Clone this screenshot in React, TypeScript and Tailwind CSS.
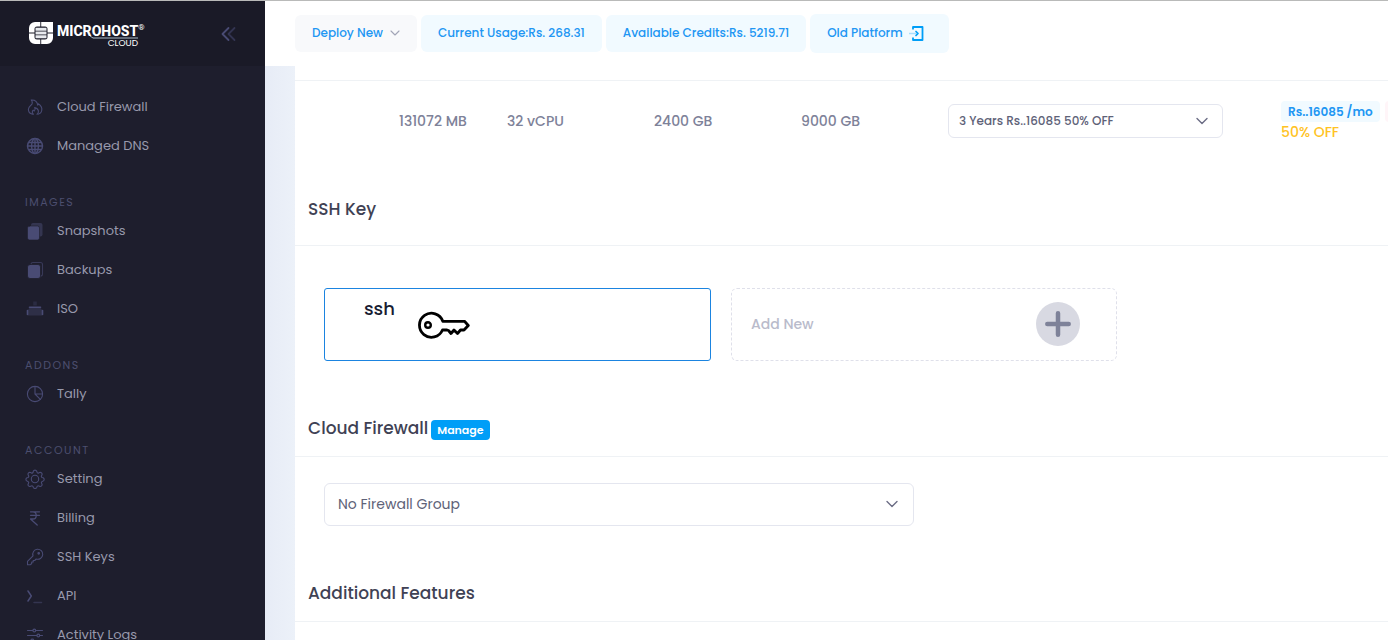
import type { ReactNode } from "react";

const stroke = {
  fill: "none",
  stroke: "currentColor",
  strokeWidth: 1.1,
  strokeLinecap: "round" as const,
  strokeLinejoin: "round" as const,
};

function Icon({ children }: { children: ReactNode }) {
  return (
    <svg viewBox="0 0 20 20" className="size-5 shrink-0 text-[#494b74]" aria-hidden="true" {...stroke}>
      {children}
    </svg>
  );
}

const icons: Record<string, ReactNode> = {
  fire: (
    <Icon>
      <path d="M7.600 17.200C4.900 16.600 3.300 14.700 3.400 12.200C3.500 9.400 6.300 8.600 7.100 6.700C7.500 5.400 7.200 4.100 6.200 3C9.500 2.800 12.300 4.600 12.700 8.200C13.100 7.800 13.300 7.300 13.300 6.800C15.600 8.400 17.200 10.600 16.800 13C16.500 15.200 15.100 16.800 13 17.200" />
      <path d="M8.400 17.200C7 16.100 6.900 14.300 8.200 13.200C8.600 13.800 9 14 9.400 14C10.300 12.900 10.300 11.700 9.700 10.600C12 11.200 13.600 13 13.400 15C13.300 16 12.800 16.800 12 17.200" />
    </Icon>
  ),
  globe: (
    <Icon>
      <g strokeWidth="1.4">
        <circle cx="10" cy="10" r="7.500" />
        <path d="M2.500 10h15M4 6.500h12M4 13.500h12M10 2.500v15" />
        <path d="M8.500 3c-2.600 4-2.600 10 0 14M11.500 3c2.600 4 2.600 10 0 14" />
      </g>
    </Icon>
  ),
  copies: (
    <Icon>
      <rect x="6" y="2" width="11.500" height="13.500" rx="2" fill="currentColor" stroke="none" opacity=".5" />
      <rect x="2.500" y="5" width="12" height="14" rx="2" fill="currentColor" stroke="#1e1e2d" strokeWidth=".6" />
    </Icon>
  ),
  backup: (
    <Icon>
      <rect x="6" y="2.500" width="11.500" height="13.500" rx="2" opacity=".6" />
      <rect x="2.500" y="4.500" width="13" height="14" rx="2.500" fill="currentColor" stroke="#1e1e2d" strokeWidth=".8" />
    </Icon>
  ),
  iso: (
    <Icon>
      <path d="M10 2.500v4" strokeWidth="3.500" strokeLinecap="butt" opacity=".3" />
      <path d="M5 8h10l2 3v5.500H3V11z" fill="currentColor" stroke="none" opacity=".38" />
      <path d="M4.500 8.200h11" strokeWidth="1.600" />
      <path d="M2.500 11.500v4M17.500 11.500v4" strokeWidth="1.600" />
    </Icon>
  ),
  pie: (
    <Icon>
      <circle cx="10" cy="10" r="7.600" />
      <path d="M10 2.500V10h7.500M10 10l5.300 5.300" />
    </Icon>
  ),
  gear: (
    <Icon>
      <circle cx="10" cy="10" r="3.700" />
      <path d="M8.300 2.300a1.800 1.800 0 0 1 3.400 0l.3.900a1.300 1.300 0 0 0 1.800.8l.7-.4a1.800 1.800 0 0 1 2.400 2.400l-.4.800a1.300 1.300 0 0 0 .7 1.700l.9.300a1.800 1.800 0 0 1 0 3.300l-.9.300a1.300 1.300 0 0 0-.7 1.700l.4.800a1.800 1.800 0 0 1-2.400 2.400l-.8-.4a1.300 1.300 0 0 0-1.700.7l-.3.900a1.800 1.800 0 0 1-3.300 0l-.3-.9a1.300 1.300 0 0 0-1.700-.7l-.8.400a1.800 1.800 0 0 1-2.400-2.400l.4-.8a1.300 1.300 0 0 0-.7-1.700l-.9-.3a1.800 1.800 0 0 1 0-3.300l.9-.3a1.300 1.300 0 0 0 .7-1.700l-.4-.8a1.800 1.800 0 0 1 2.400-2.400l.8.400a1.300 1.300 0 0 0 1.700-.7z" />
    </Icon>
  ),
  rupee: (
    <Icon>
      <path d="M5.500 3.800h9M5.500 7.300h9M5.500 3.800h2.300c4.600 0 4.600 7.200 0 7.200H5.500l6.700 6" strokeWidth="1.300" />
    </Icon>
  ),
  key: (
    <Icon>
      <path d="M2.500 14.300 8 8.800A5 5 0 1 1 11.200 12l-1.500 1.500H8.200v1.500H6.700v1.500l-1.200 1.200h-3z" />
      <circle cx="13.700" cy="6.300" r=".8" fill="currentColor" />
    </Icon>
  ),
  terminal: (
    <Icon>
      <path d="m3 5 3.300 5L3 15" strokeWidth="1.500" />
      <path d="M9 16.500h7.500" strokeWidth="1.500" opacity=".5" />
    </Icon>
  ),
  sliders: (
    <Icon>
      <path d="M2.500 5.500h5.300M10.800 5.500h6.700M2.500 10.500h9.300M14.800 10.500h2.700M2.500 15.500h3.300M8.800 15.500h8.700" />
      <circle cx="9.300" cy="5.500" r="1.400" />
      <circle cx="13.300" cy="10.500" r="1.400" />
      <circle cx="7.300" cy="15.500" r="1.400" />
    </Icon>
  ),
};

type Group = { title?: string; items: { icon: string; label: string }[] };

const groups: Group[] = [
  {
    items: [
      { icon: "fire", label: "Cloud Firewall" },
      { icon: "globe", label: "Managed DNS" },
    ],
  },
  {
    title: "Images",
    items: [
      { icon: "copies", label: "Snapshots" },
      { icon: "backup", label: "Backups" },
      { icon: "iso", label: "ISO" },
    ],
  },
  { title: "Addons", items: [{ icon: "pie", label: "Tally" }] },
  {
    title: "Account",
    items: [
      { icon: "gear", label: "Setting" },
      { icon: "rupee", label: "Billing" },
      { icon: "key", label: "SSH Keys" },
      { icon: "terminal", label: "API" },
      { icon: "sliders", label: "Activity Logs" },
    ],
  },
];

function Logo() {
  return (
    <a href="#" className="flex items-start gap-[3px] text-white" aria-label="Microhost Cloud">
      <svg viewBox="0 0 26 24" className="h-6 w-[26px]" aria-hidden="true">
        <path
          d="M7 1h5.300v4.500H9A2.500 2.500 0 0 0 6.500 8v3.500H1V7a6 6 0 0 1 6-6zM13.200 1H25v10.500h-5.500V8A2.500 2.500 0 0 0 17 5.500h-3.800zM1 12.500h5.500V16A2.500 2.500 0 0 0 9 18.500h3.300V23H7a6 6 0 0 1-6-6zM19.500 12.500H25V17a6 6 0 0 1-6 6h-5.800v-4.500H17a2.500 2.500 0 0 0 2.500-2.500z"
          fill="#fff"
        />
        <path d="M7.500 6.800h11v3h-11zM7.500 10.500h11v3h-11zM7.500 14.200h11v3h-11z" fill="#e8eaee" />
      </svg>
      <span className="flex flex-col pt-[3px] font-['Roboto',sans-serif]">
        <span className="flex h-3 items-start text-sm leading-[14px] font-extrabold">
          MICROHOST<span className="text-[8px] leading-[8px] font-normal">®</span>
        </span>
        <svg viewBox="0 0 82 3" className="h-[3px] w-[82px]" aria-hidden="true">
          <path d="M33 0l3 2h45" fill="none" stroke="#a9b9c6" />
        </svg>
        <span className="w-[81px] text-right font-['Poppins','Inter',sans-serif] text-[9px] leading-2">CLOUD</span>
      </span>
    </a>
  );
}

function Sidebar() {
  return (
    <aside className="flex w-[265px] shrink-0 flex-col overflow-hidden bg-[#1e1e2d]">
      <div className="flex h-[65px] shrink-0 items-center justify-between bg-[#1a1a27] pr-7 pl-7">
        <Logo />
        <button type="button" aria-label="Collapse menu" className="text-[#494b74]">
          <svg viewBox="0 0 16 16" className="size-4" aria-hidden="true" {...stroke} strokeWidth={1.8}>
            <path d="M7.500 2 1.500 8l6 6" />
            <path d="m13.500 2-6 6 6 6" opacity=".55" />
          </svg>
        </button>
      </div>
      <nav className="pt-[21px]">
        {groups.map((group, i) => (
          <section key={i}>
            {group.title && (
              <h2 className="mt-7 pl-[25px] text-[11px] leading-[18px] tracking-[1.5px] text-[#4c4e6f] uppercase">
                {group.title}
              </h2>
            )}
            <ul>
              {group.items.map((item) => (
                <li key={item.label}>
                  <a href="#" className="flex h-[39px] items-center gap-3 pl-[25px] text-[13px] text-[#9899ac]">
                    {icons[item.icon]}
                    {item.label}
                  </a>
                </li>
              ))}
            </ul>
          </section>
        ))}
      </nav>
    </aside>
  );
}

function TopBar() {
  const pill = "flex h-[37px] items-center rounded-md px-[17px] pb-0.5 whitespace-nowrap";
  return (
    <header className="flex h-[65px] shrink-0 items-center gap-1 bg-white pl-[30px] text-xs font-medium text-[#2196f3]">
      <button type="button" className={`${pill} gap-[7px] bg-[#f8f9fb]`}>
        Deploy New
        <svg viewBox="0 0 10 10" className="size-2.5 text-[#a1a5b7]" aria-hidden="true" {...stroke}>
          <path d="m1 3 4 4 4-4" />
        </svg>
      </button>
      <span className={`${pill} bg-[#f1faff]`}>Current Usage:Rs. 268.31</span>
      <span className={`${pill} bg-[#f1faff]`}>Available Credits:Rs. 5219.71</span>
      <a
        href="#"
        className="flex h-[39px] items-center gap-1.5 rounded-md bg-[#f1faff] pr-[25px] pb-0.5 pl-[17px] whitespace-nowrap"
      >
        Old Platform
        <svg viewBox="0 0 15 16" className="h-4 w-[15px] text-[#009ef7]" aria-hidden="true" {...stroke}>
          <path d="M4 4.500V2h9.500v13H4v-2.500" strokeWidth="1.800" strokeLinecap="butt" />
          <path d="M0 8.500h8" strokeWidth="1.500" opacity=".3" />
          <path d="m7 6.500 2 2-2 2" strokeWidth="1.700" />
        </svg>
      </a>
    </header>
  );
}

function Select({ label, option, className, chevron }: { label: string; option: string; className: string; chevron: string }) {
  return (
    <div className="relative">
      <select
        aria-label={label}
        className={`w-full appearance-none rounded-md border border-[#e4e6ef] bg-white ${className}`}
      >
        <option>{option}</option>
      </select>
      <svg
        viewBox="0 0 12 12"
        className={`pointer-events-none absolute top-1/2 size-3 -translate-y-1/2 text-[#6b6d85] ${chevron}`}
        aria-hidden="true"
        {...stroke}
        strokeWidth={1.4}
      >
        <path d="m1 3.500 5 5 5-5" />
      </svg>
    </div>
  );
}

function SectionTitle({ children, className }: { children: ReactNode; className: string }) {
  return (
    <div className={`flex items-center gap-[3px] border-b border-[#eff2f5] pl-[13px] ${className}`}>{children}</div>
  );
}

const titleText = "text-[17px] leading-6 font-medium text-[#3f4254]";

function PlanRow() {
  return (
    <table className="w-full table-fixed border-t border-[#eff2f5] text-left text-sm font-medium text-[#7e8299]">
      <colgroup>
        <col className="w-[104px]" />
        <col className="w-[108px]" />
        <col className="w-[147px]" />
        <col className="w-[147px]" />
        <col className="w-[147px]" />
        <col className="w-[333px]" />
        <col />
      </colgroup>
      <tbody>
        <tr className="h-[81px] whitespace-nowrap">
          <td />
          <td>131072 MB</td>
          <td>32 vCPU</td>
          <td>2400 GB</td>
          <td>9000 GB</td>
          <td className="pr-[58px]">
            <Select
              label="Billing term"
              option="3 Years Rs..16085 50% OFF"
              className="h-[34px] px-2.5 text-xs font-medium text-[#5e6278]"
              chevron="right-[15px]"
            />
          </td>
          <td className="overflow-hidden leading-5">
            <div className="flex gap-[5px]">
              <span className="rounded bg-[#f1faff] px-[7px] text-xs leading-[21px] font-semibold text-[#2196f3]">
                Rs..16085 /mo
              </span>
              <span className="w-10 shrink-0 rounded bg-[#fff5f8]" />
            </div>
            <div className="font-medium text-[#ffc324]">50% OFF</div>
          </td>
        </tr>
      </tbody>
    </table>
  );
}

export default function App() {
  return (
    <div className="flex h-screen overflow-hidden border-t border-[#b9bab9] font-['Poppins','Inter',sans-serif]">
      <Sidebar />
      <div className="flex min-w-0 flex-1 flex-col">
        <TopBar />
        <main className="min-h-0 flex-1 overflow-hidden bg-linear-to-r from-[#e7ecf6] to-[#ecf1f9] to-[30px] pl-[30px]">
          <div className="h-full bg-white pt-3.5">
            <PlanRow />

            <div className="pt-[11px]">
              <SectionTitle className="h-[73px]">
                <h2 className={titleText}>SSH Key</h2>
              </SectionTitle>
              <div className="flex gap-5 pt-[42px] pl-[29px]">
                <button
                  type="button"
                  className="flex h-[73px] w-[387px] items-start gap-[23px] rounded-[3px] border border-[#1b84e0] pt-2 pl-[39px] text-lg leading-6 font-medium text-[#181c32]"
                >
                  ssh
                  <svg viewBox="0 0 52 28" className="mt-3.5 h-7 w-[52px] text-black" aria-hidden="true" {...stroke} strokeWidth={2.8}>
                    <path d="M24.800 10.300A12 12 0 1 0 24.500 19L29 19l1.500.5 2.500 3 3-3.500 3.500 3.500 3-3.500h3.500L50.300 14.500 46.500 10.300z" />
                    <circle cx="10" cy="14" r="2.800" strokeWidth="2.400" />
                  </svg>
                </button>
                <button
                  type="button"
                  className="flex h-[73px] w-[386px] items-center justify-between rounded-md border border-dashed border-[#dfe0ea] pr-9 pl-[19px] text-sm font-medium text-[#b9bbcb]"
                >
                  Add New
                  <span className="flex size-11 items-center justify-center rounded-full bg-[#d8d9e2]">
                    <svg viewBox="0 0 26 26" className="size-[26px] text-[#7e8299]" aria-hidden="true" {...stroke} strokeWidth={4.500}>
                      <path d="M13 2.300v21.400M2.300 13h21.400" />
                    </svg>
                  </span>
                </button>
              </div>
            </div>

            <div className="pt-10">
              <SectionTitle className="h-14">
                <h2 className={titleText}>Cloud Firewall</h2>
                <a href="#" className="mt-1 rounded bg-[#009ef7] px-1.5 text-[11px] leading-5 font-semibold text-white">
                  Manage
                </a>
              </SectionTitle>
              <div className="w-[619px] pt-[26px] pl-[29px]">
                <Select
                  label="Firewall group"
                  option="No Firewall Group"
                  className="h-[43px] px-[13px] text-sm text-[#5e6278]"
                  chevron="right-4"
                />
              </div>
            </div>

            <div className="pt-10">
              <SectionTitle className="h-14">
                <h2 className={titleText}>Additional Features</h2>
              </SectionTitle>
            </div>
          </div>
        </main>
      </div>
    </div>
  );
}
